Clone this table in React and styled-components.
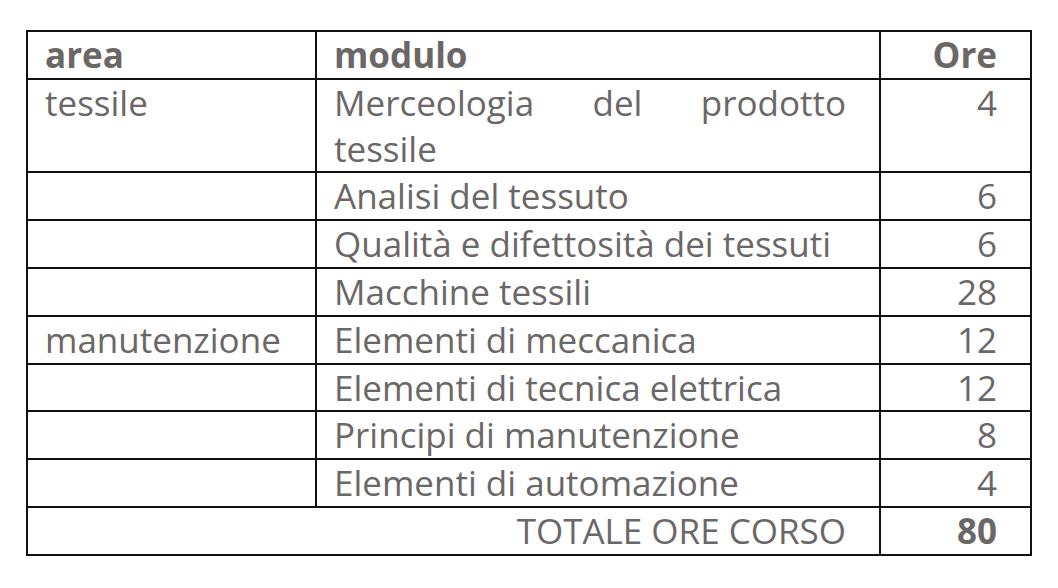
import styled, { createGlobalStyle } from "styled-components";

const GlobalStyle = createGlobalStyle`
    body {
        margin: 0;
        background: #ffffff;
    }
`;

const rows = [
    { area: "tessile", modulo: "Merceologia del prodotto tessile", ore: 4 },
    { area: "", modulo: "Analisi del tessuto", ore: 6 },
    { area: "", modulo: "Qualità e difettosità dei tessuti", ore: 6 },
    { area: "", modulo: "Macchine tessili", ore: 28 },
    { area: "manutenzione", modulo: "Elementi di meccanica", ore: 12 },
    { area: "", modulo: "Elementi di tecnica elettrica", ore: 12 },
    { area: "", modulo: "Principi di manutenzione", ore: 8 },
    { area: "", modulo: "Elementi di automazione", ore: 4 },
];

const App = () => {
    return (
        <Page>
            <GlobalStyle />
            <Table>
                <colgroup>
                    <col style={{ width: 289 }} />
                    <col style={{ width: 564 }} />
                    <col style={{ width: 151 }} />
                </colgroup>
                <thead>
                    <tr>
                        <Cell as="th" bold>area</Cell>
                        <Cell as="th" bold>modulo</Cell>
                        <Cell as="th" bold align="right">Ore</Cell>
                    </tr>
                </thead>
                <tbody>
                    {rows.map((row) => (
                        <tr key={row.modulo}>
                            <Cell>{row.area}</Cell>
                            <Cell justify>{row.modulo}</Cell>
                            <Cell align="right">{row.ore}</Cell>
                        </tr>
                    ))}
                    <tr>
                        <Cell colSpan={2} align="right">TOTALE ORE CORSO</Cell>
                        <Cell bold align="right">80</Cell>
                    </tr>
                </tbody>
            </Table>
        </Page>
    );
};

export default App;

const Page = styled.div`
    padding: 30px 0 0 26px;
    width: 1058px;
    height: 588px;
    box-sizing: border-box;
`;

const Table = styled.table`
    border-collapse: collapse;
    table-layout: fixed;
    width: 1006px;
    font-family: "Open Sans", "DejaVu Sans", sans-serif;
    font-size: 35px;
    color: #6b6767;
`;

const Cell = styled.td`
    border: 2px solid #111;
    padding: 0 33px 0 17px;
    line-height: 45.8px;
    vertical-align: top;
    font-weight: ${(props) => (props.bold ? 700 : 400)};
    text-align: ${(props) => (props.justify ? "justify" : props.align || "left")};
    text-align-last: ${(props) => (props.align === "right" ? "right" : "left")};
`;
